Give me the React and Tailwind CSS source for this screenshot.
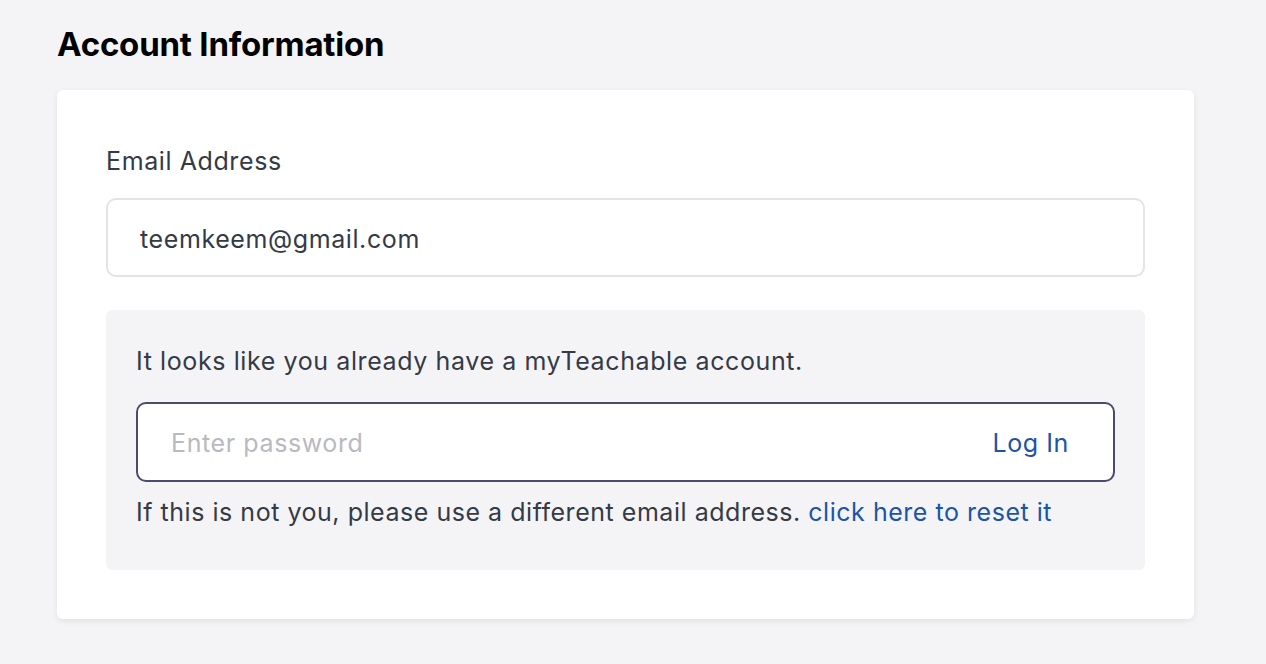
import React from 'react';

const AccountInformation = () => {
    return (
        <div className="min-h-screen w-full bg-[#f4f4f6] font-['Inter',sans-serif] pt-[24px] pl-[57px]">
            {/* Heading */}
            <h1 className="text-[33px] font-bold leading-[40px] tracking-[-0.2px] text-black">
                Account Information
            </h1>

            {/* Card */}
            <div className="mt-[26px] w-[1137px] h-[529px] rounded-[6px] bg-white shadow-[0_2px_6px_rgba(0,0,0,0.08)] pt-[56px] px-[49px]">
                <label className="block text-[25px] leading-[30px] tracking-[0.6px] text-[#343a46]">
                    Email Address
                </label>

                <div className="mt-[22px] h-[79px] rounded-[10px] border-2 border-[#e3e3e8] flex items-center px-[32px] pt-[4px]">
                    <span className="text-[25px] tracking-[0.6px] text-[#343a46]">teemkeem@gmail.com</span>
                </div>

                {/* Existing account notice */}
                <div className="mt-[33px] h-[260px] rounded-[6px] bg-[#f4f4f7] px-[30px] pt-[35px] tracking-[0.6px]">
                    <p className="text-[25px] leading-[32px] text-[#343a46]">
                        It looks like you already have a myTeachable account.
                    </p>

                    <div className="mt-[25px] h-[80px] rounded-[10px] border-2 border-[#4a4b6e] bg-white flex items-center justify-between pl-[33px] pr-[44px] pt-[4px]">
                        <span className="text-[25px] text-[#b9b9c0]">Enter password</span>
                        <span className="text-[25px] text-[#1c54a8]">Log In</span>
                    </div>

                    <p className="mt-[14px] text-[25px] leading-[32px] tracking-[0.53px] text-[#343a46]">
                        If this is not you, please use a different email address.{' '}
                        <span className="text-[#1c54a8]">click here to reset it</span>
                    </p>
                </div>
            </div>
        </div>
    );
};

export default function App() {
    return <AccountInformation />;
}
